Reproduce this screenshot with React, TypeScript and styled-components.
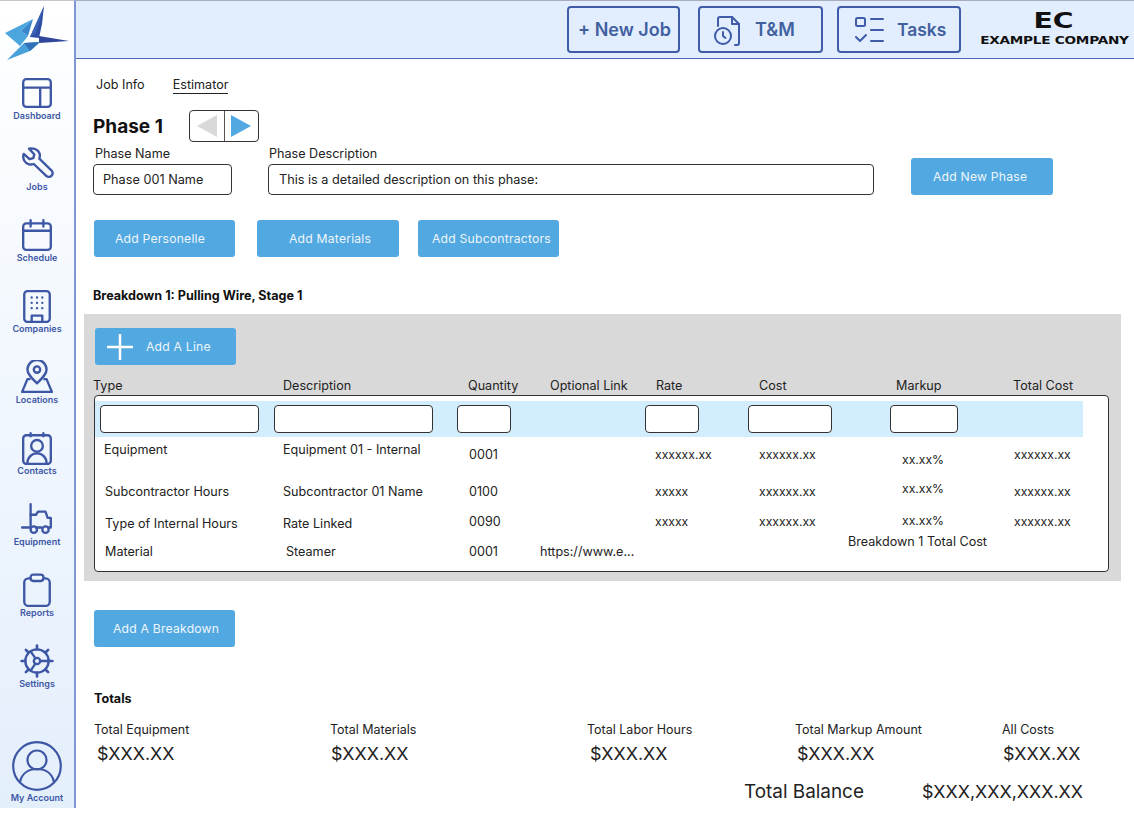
import React from "react";
import styled, { createGlobalStyle } from "styled-components";

const Global = createGlobalStyle`
  html, body { margin: 0; padding: 0; background: #fff; }
  body { font-family: Inter, "Liberation Sans", sans-serif; color: #222; }
  * { box-sizing: border-box; }
`;

const Page = styled.div`
  display: flex;
  width: 1134px;
  height: 808px;
  overflow: hidden;
`;
const Sidebar = styled.nav`
  width: 76px;
  flex: none;
  height: 808px;
  display: flex;
  flex-direction: column;
  align-items: center;
  background: linear-gradient(180deg, #ffffff 0%, #f3f8fe 40%, #e4effc 100%);
  border-right: 2px solid #7f97d3;
  border-top: 1px solid #c4c6cc;
`;
const LogoWrap = styled.div`
  height: 63px;
  width: 74px;
  flex: none;
  svg { display: block; margin-top: -1px; }
`;
const NavList = styled.div`
  display: flex;
  flex-direction: column;
  align-items: center;
  gap: 26px;
  margin-top: 12px;
`;
const NavItem = styled.div`
  height: 45px;
  width: 74px;
  display: flex;
  flex-direction: column;
  align-items: center;
  justify-content: space-between;
`;
const NavLabel = styled.span`
  font-size: 9px;
  line-height: 11px;
  font-weight: 600;
  color: #3d57a5;
  white-space: nowrap;
`;
const Account = styled.div`
  margin-top: auto;
  height: 62px;
  display: flex;
  flex-direction: column;
  align-items: center;
  justify-content: space-between;
  margin-bottom: 5px;
`;
const Main = styled.main`
  flex: 1;
  min-width: 0;
  display: flex;
  flex-direction: column;
`;
const Header = styled.header`
  height: 59px;
  flex: none;
  background: #e2eefd;
  border-top: 1px solid #a9adbb;
  border-bottom: 1px solid #4f6cb8;
  display: flex;
  align-items: center;
  padding: 0 0 0 491px;
`;
const HeadButton = styled.div<{ $w: number; $gap: number; $ml: number; $pl: number; $fs?: number }>`
  width: ${(p) => p.$w}px;
  margin-left: ${(p) => p.$ml}px;
  padding-left: ${(p) => p.$pl}px;
  height: 47px;
  border: 2px solid #3f5ba9;
  border-radius: 4px;
  display: flex;
  align-items: center;
  gap: ${(p) => p.$gap}px;
  font-size: ${(p) => p.$fs ?? 18}px;
  font-weight: 600;
  color: #41609f;
  white-space: nowrap;
`;
const Company = styled.div`
  margin-left: 18px;
  width: 150px;
  display: flex;
  flex-direction: column;
  align-items: center;
  color: #111;
  line-height: 1;
`;
const CompanyMark = styled.span`
  font-family: "DejaVu Sans", sans-serif;
  font-size: 20.5px;
  font-weight: 700;
  height: 21px;
  transform: scaleX(1.38);
  margin-top: -2px;
`;
const CompanyName = styled.span`
  font-family: "DejaVu Sans", sans-serif;
  font-size: 10.2px;
  font-weight: 700;
  letter-spacing: -0.2px;
  white-space: nowrap;
  margin-top: 4px;
  transform: scaleX(1.34);
`;
const Content = styled.div`
  padding: 0 0 0 17px;
  flex: 1;
`;
const Tabs = styled.div`
  display: flex;
  gap: 28px;
  padding: 18px 0 0 3px;
  height: 50px;
`;
const Tab = styled.span<{ $active?: boolean }>`
  font-size: 12.6px;
  line-height: 16px;
  height: 16px;
  color: #222;
  ${(p) => p.$active && "border-bottom: 1px solid #222; height: 17px;"}
`;
const PhaseRow = styled.div`
  display: flex;
  align-items: center;
  height: 33px;
`;
const PhaseTitle = styled.h1`
  margin: 2px 0 0;
  width: 96px;
  font-size: 19px;
  font-weight: 700;
  color: #111;
`;
const Pager = styled.div`
  width: 70px;
  height: 32px;
  border: 1px solid #333;
  border-radius: 4px;
  display: flex;
  svg { display: block; }
`;
const PagerSide = styled.div<{ $divider?: boolean }>`
  flex: 1;
  display: flex;
  align-items: center;
  justify-content: center;
  ${(p) => p.$divider && "border-right: 1px solid #555;"}
`;
const PhaseFields = styled.div`
  display: flex;
  align-items: flex-end;
  margin-top: 4px;
`;
const Field = styled.div<{ $w: number; $mr: number }>`
  width: ${(p) => p.$w}px;
  margin-right: ${(p) => p.$mr}px;
  display: flex;
  flex-direction: column;
`;
const FieldLabel = styled.label<{ $pl: number }>`
  font-size: 12.6px;
  line-height: 16px;
  padding-left: ${(p) => p.$pl}px;
  margin-bottom: 2px;
  color: #222;
`;
const TextBox = styled.div<{ $pl: number }>`
  height: 31px;
  border: 1px solid #333;
  border-bottom-width: 1.5px;
  border-radius: 4px;
  background: #fff;
  font-size: 12.7px;
  line-height: 29px;
  padding-left: ${(p) => p.$pl}px;
  color: #222;
  white-space: nowrap;
`;
const BlueButton = styled.div<{ $w?: number; $pl?: number }>`
  width: ${(p) => p.$w ?? 142}px;
  height: 37px;
  flex: none;
  border-radius: 3px;
  background: #52a8e0;
  color: #eef6fc;
  font-size: 12.2px;
  letter-spacing: 0.2px;
  display: flex;
  align-items: center;
  padding-left: ${(p) => p.$pl ?? 12}px;
  white-space: nowrap;
`;
const NewPhase = styled(BlueButton)`
  margin-left: 37px;
`;
const ActionRow = styled.div`
  display: flex;
  margin-top: 25px;
  padding-left: 1px;
`;
const ActionButton = styled(BlueButton)<{ $ml?: number }>`
  margin-left: ${(p) => p.$ml ?? 0}px;
`;
const BreakdownTitle = styled.h2`
  margin: 31px 0 0;
  font-size: 12.6px;
  line-height: 16px;
  font-weight: 700;
  color: #111;
`;
const Panel = styled.section`
  margin: 10px 0 0 -9px;
  width: 1037px;
  height: 267px;
  background: #d9d9d9;
  padding: 14px 0 0 10px;
`;
const LineButton = styled(BlueButton)`
  margin-left: 1px;
  gap: 13px;
  width: 141px;
`;
const ColHeads = styled.div`
  height: 16px;
  margin: 13px 0 0 -1px;
  display: grid;
  grid-template-columns: 190px 185px 82px 106px 103px 137px 117px 1fr;
  font-size: 12.6px;
  line-height: 16px;
  color: #222;
  white-space: nowrap;
`;
const TableBox = styled.div`
  margin-top: 1px;
  width: 1015px;
  height: 177px;
  border: 1px solid #333;
  border-radius: 4px;
  background: #fff;
  padding-top: 5px;
`;
const InputRow = styled.div`
  width: 988px;
  height: 36px;
  background: #d2edfd;
  display: flex;
  align-items: center;
`;
const CellInput = styled.div<{ $w: number; $ml: number }>`
  width: ${(p) => p.$w}px;
  margin-left: ${(p) => p.$ml}px;
  height: 28px;
  flex: none;
  border: 1px solid #333;
  border-radius: 4px;
  background: #fff;
`;
const Row = styled.div<{ $h: number }>`
  height: ${(p) => p.$h}px;
  display: grid;
  grid-template-columns: 188px 186px 71px 115px 104px 138px 117px 1fr;
`;
const Cell = styled.div<{ $top: number; $left?: number; $small?: boolean }>`
  padding-top: ${(p) => p.$top}px;
  padding-left: ${(p) => p.$left ?? 0}px;
  font-size: ${(p) => (p.$small ? 12.2 : 12.6)}px;
  line-height: 16px;
  color: #222;
  white-space: nowrap;
`;
const AddBreakdown = styled(BlueButton)`
  margin: 29px 0 0 1px;
`;
const TotalsTitle = styled.h3`
  margin: 44px 0 0 1px;
  font-size: 12.6px;
  line-height: 16px;
  font-weight: 700;
  color: #111;
`;
const TotalsGrid = styled.div`
  margin-top: 15px;
  display: grid;
  grid-template-columns: 236px 257px 208px 207px 1fr;
  padding-left: 1px;
`;
const TotalCol = styled.div`
  display: flex;
  flex-direction: column;
`;
const TotalLabel = styled.span`
  font-size: 12.5px;
  line-height: 16px;
  color: #222;
`;
const TotalValue = styled.span<{ $ml: number }>`
  font-size: 17.9px;
  line-height: 24px;
  margin-top: 4px;
  margin-left: ${(p) => p.$ml}px;
  color: #222;
`;
const BalanceRow = styled.div`
  display: flex;
  margin: 14px 0 0 651px;
  line-height: 24px;
  color: #222;
`;
const BalanceLabel = styled.span`
  width: 178px;
  font-size: 18.9px;
`;
const BalanceValue = styled.span`
  font-size: 17.9px;
`;

const Ic = ({ size = 34, children }: { size?: number; children: React.ReactNode }) => (
  <svg width={size} height={size} viewBox="0 0 32 32" fill="none" stroke="#3d57a5" strokeWidth="2.2" strokeLinecap="round" strokeLinejoin="round">
    {children}
  </svg>
);

const navItems: [string, React.ReactNode][] = [
  ["Dashboard", <><rect x="3" y="3" width="26" height="26" rx="3" /><path d="M3 11h26M19 11v18" /></>],
  ["Jobs", <path d="M3.5 6.5 9 11.5l3.5-1 1-3.5-5-5.5c4-1 9 1 10 5 .4 1.700.2 3-.3 4.500L30 22.500c1 1.500 1 3-.3 4.500s-3.700 1.500-5 .2L13 16c-1.500.5-3 .7-4.500.3-4-1-6.500-5.500-5-9.800Z" />],
  ["Schedule", <><rect x="3" y="5" width="26" height="25" rx="3" /><path d="M3 12h26M10 2v6M22 2v6" /></>],
  ["Companies", <><rect x="4" y="2" width="24" height="29" rx="3" /><path d="M11 31v-6h10v6" /><g strokeWidth="2.200"><path d="M11 8h.01M16 8h.01M21 8h.01M11 13h.01M16 13h.01M21 13h.01M11 18h.01M16 18h.01M21 18h.01" /></g></>],
  ["Locations", <><path d="M16 22c-5-5-9-8.500-9-13a9 9 0 0 1 18 0c0 4.500-4 8-9 13Z" /><circle cx="16" cy="9" r="3" /><path d="M9 18H7L2 30h28l-5-12h-2" /></>],
  ["Contacts", <><rect x="3" y="4" width="26" height="27" rx="3" /><path d="M10 2v3M22 2v3" /><circle cx="16" cy="14" r="5.500" /><path d="M7 30c0-5 4-9 9-9s9 4 9 9" /></>],
  ["Equipment", <><path d="M10 2v22H2" /><path d="M10 12h5l2-3h7l2 6h3v9h-2" /><path d="M15 24h5" /><circle cx="13" cy="26" r="3" /><circle cx="24" cy="26" r="3" /></>],
  ["Reports", <><rect x="4" y="5" width="24" height="26" rx="4" /><rect x="10" y="1.500" width="12" height="6" rx="2.500" fill="#f0f6fd" /></>],
  ["Settings", <><circle cx="16" cy="16" r="11" /><circle cx="16" cy="16" r="3" /><path d="M19 16h8M14.500 13.500 10 7M14.500 18.500 10 25" /><path d="M16 1.500V5M16 27v3.500M1.500 16H5M27 16h3.500M5.500 5.500 8 8M24 24l2.500 2.500M26.500 5.500 24 8M8 24l-2.500 2.500" strokeWidth="2.500" /></>],
];

const Logo = () => (
  <svg width="74" height="64" viewBox="0 0 74 64">
    <polygon points="5,33 33,19 21,31 28,36 20,46" fill="#4ca6de" />
    <polygon points="33,19 21,31 28,36" fill="#3a86cc" />
    <polygon points="44,6 42,24 39,38 30,37" fill="#2f4ea6" />
    <polygon points="44,6 36,33 30,37" fill="#3b63b6" />
    <polygon points="39,36 69,41 39,43" fill="#31479c" />
    <polygon points="7,60 24,43 40,42 30,51" fill="#4aa0da" />
    <polygon points="24,43 40,42 30,51" fill="#3071b8" />
  </svg>
);

const rows = [
  { h: 39, cells: [["Equipment", 4, 9], ["Equipment 01 - Internal", 4, 0], ["0001", 9, 0], ["", 0, 0], ["xxxxxx.xx", 9, 0, 1], ["xxxxxx.xx", 9, 0, 1], ["xx.xx%", 14, 5, 1], ["xxxxxx.xx", 9, 0, 1]] },
  { h: 32, cells: [["Subcontractor Hours", 7, 10], ["Subcontractor 01 Name", 7, 0], ["0100", 7, 0], ["", 0, 0], ["xxxxx", 7, 0, 1], ["xxxxxx.xx", 7, 0, 1], ["xx.xx%", 4, 5, 1], ["xxxxxx.xx", 7, 0, 1]] },
  { h: 28, cells: [["Type of Internal Hours", 7, 10], ["Rate Linked", 7, 0], ["0090", 5, 0], ["", 0, 0], ["xxxxx", 5, 0, 1], ["xxxxxx.xx", 5, 0, 1], ["xx.xx%", 4, 5, 1], ["xxxxxx.xx", 5, 0, 1]] },
  { h: 30, cells: [["Material", 7, 10], ["Steamer", 7, 3], ["0001", 7, 0], ["https://www.e...", 7, -10], ["", 0, 0], ["", 0, 0], ["", 0, 0], ["", 0, 0]] },
] as { h: number; cells: [string, number, number, number?][] }[];

const heads = ["Type", "Description", "Quantity", "Optional Link", "Rate", "Cost", "Markup", "Total Cost"];
const totals: [string, string, number][] = [
  ["Total Equipment", "$XXX.XX", 3],
  ["Total Materials", "$XXX.XX", 1],
  ["Total Labor Hours", "$XXX.XX", 3],
  ["Total Markup Amount", "$XXX.XX", 2],
  ["All Costs", "$XXX.XX", 1],
];

const BreakdownTotal = styled.span`
  position: absolute;
  left: 753px;
  top: 97px;
  font-size: 12.6px;
  line-height: 16px;
  color: #222;
  white-space: nowrap;
`;
const TableInner = styled.div`
  position: relative;
  padding-top: 1px;
`;

export default function App() {
  return (
    <Page>
      <Global />
      <Sidebar>
        <LogoWrap><Logo /></LogoWrap>
        <NavList>
          {navItems.map(([label, icon]) => (
            <NavItem key={label}>
              <Ic>{icon}</Ic>
              <NavLabel>{label}</NavLabel>
            </NavItem>
          ))}
        </NavList>
        <Account>
          <svg width="50" height="50" viewBox="0 0 50 50" fill="none" stroke="#3d57a5" strokeWidth="2.200">
            <circle cx="25" cy="25" r="23.800" />
            <circle cx="25" cy="19" r="9.500" />
            <path d="M8 41c2-9 9-13 17-13s15 4 17 13" />
          </svg>
          <NavLabel>My Account</NavLabel>
        </Account>
      </Sidebar>
      <Main>
        <Header>
          <HeadButton $w={113} $gap={0} $ml={0} $pl={9}>+ New Job</HeadButton>
          <HeadButton $w={125} $gap={12} $ml={18} $pl={13}>
            <svg width="30" height="32" viewBox="0 0 30 32" fill="none" stroke="#3f5ba9" strokeWidth="2" strokeLinecap="round" strokeLinejoin="round">
              <path d="M5 12V5a2 2 0 0 1 2-2h12l7 7v19a2 2 0 0 1-2 2h-2" />
              <path d="M19 3v7h7" />
              <circle cx="10" cy="22" r="8" />
              <path d="M10 18v4l2.500 2" />
            </svg>
            <span>T&amp;M</span>
          </HeadButton>
          <HeadButton $w={124} $gap={11} $ml={14} $pl={15} $fs={17.4}>
            <svg width="32" height="28" viewBox="0 0 32 28" fill="none" stroke="#3f5ba9" strokeWidth="2" strokeLinecap="round" strokeLinejoin="round">
              <rect x="2" y="2" width="9" height="8" rx="1.500" />
              <path d="M17 3h12M17 14h12M17 25h12M2 21l4 4 6-6" />
            </svg>
            <span>Tasks</span>
          </HeadButton>
          <Company>
            <CompanyMark>EC</CompanyMark>
            <CompanyName>EXAMPLE COMPANY</CompanyName>
          </Company>
        </Header>
        <Content>
          <Tabs>
            <Tab>Job Info</Tab>
            <Tab $active>Estimator</Tab>
          </Tabs>
          <PhaseRow>
            <PhaseTitle>Phase 1</PhaseTitle>
            <Pager>
              <PagerSide $divider>
                <svg width="20" height="22" viewBox="0 0 20 22"><polygon points="0,11 20,0 20,22" fill="#d9d9d9" /></svg>
              </PagerSide>
              <PagerSide>
                <svg width="20" height="22" viewBox="0 0 20 22"><polygon points="20,11 0,0 0,22" fill="#52a8e0" /></svg>
              </PagerSide>
            </Pager>
          </PhaseRow>
          <PhaseFields>
            <Field $w={139} $mr={36}>
              <FieldLabel $pl={2}>Phase Name</FieldLabel>
              <TextBox $pl={9}>Phase 001 Name</TextBox>
            </Field>
            <Field $w={606} $mr={0}>
              <FieldLabel $pl={1}>Phase Description</FieldLabel>
              <TextBox $pl={10}>This is a detailed description on this phase:</TextBox>
            </Field>
            <NewPhase $pl={22}>Add New Phase</NewPhase>
          </PhaseFields>
          <ActionRow>
            <ActionButton $w={141} $pl={21}>Add Personelle</ActionButton>
            <ActionButton $ml={22} $pl={32}>Add Materials</ActionButton>
            <ActionButton $ml={19} $w={141} $pl={14}>Add Subcontractors</ActionButton>
          </ActionRow>
          <BreakdownTitle>Breakdown 1: Pulling Wire, Stage 1</BreakdownTitle>
          <Panel>
            <LineButton>
              <svg width="26" height="26" viewBox="0 0 26 26" stroke="#fff" strokeWidth="2.500"><path d="M13 0v26M0 13h26" /></svg>
              Add A Line
            </LineButton>
            <ColHeads>
              {heads.map((h) => <span key={h}>{h}</span>)}
            </ColHeads>
            <TableBox>
              <InputRow>
                <CellInput $w={159} $ml={5} />
                <CellInput $w={159} $ml={15} />
                <CellInput $w={54} $ml={24} />
                <CellInput $w={54} $ml={134} />
                <CellInput $w={84} $ml={49} />
                <CellInput $w={68} $ml={58} />
              </InputRow>
              <TableInner>
                {rows.map((r, i) => (
                  <Row key={i} $h={r.h}>
                    {r.cells.map(([t, top, left, small], j) => (
                      <Cell key={j} $top={top} $left={left} $small={!!small}>{t}</Cell>
                    ))}
                  </Row>
                ))}
                <BreakdownTotal>Breakdown 1 Total Cost</BreakdownTotal>
              </TableInner>
            </TableBox>
          </Panel>
          <AddBreakdown $w={141} $pl={19}>Add A Breakdown</AddBreakdown>
          <TotalsTitle>Totals</TotalsTitle>
          <TotalsGrid>
            {totals.map(([l, v, m]) => (
              <TotalCol key={l}>
                <TotalLabel>{l}</TotalLabel>
                <TotalValue $ml={m}>{v}</TotalValue>
              </TotalCol>
            ))}
          </TotalsGrid>
          <BalanceRow>
            <BalanceLabel>Total Balance</BalanceLabel>
            <BalanceValue>$XXX,XXX,XXX.XX</BalanceValue>
          </BalanceRow>
        </Content>
      </Main>
    </Page>
  );
}
